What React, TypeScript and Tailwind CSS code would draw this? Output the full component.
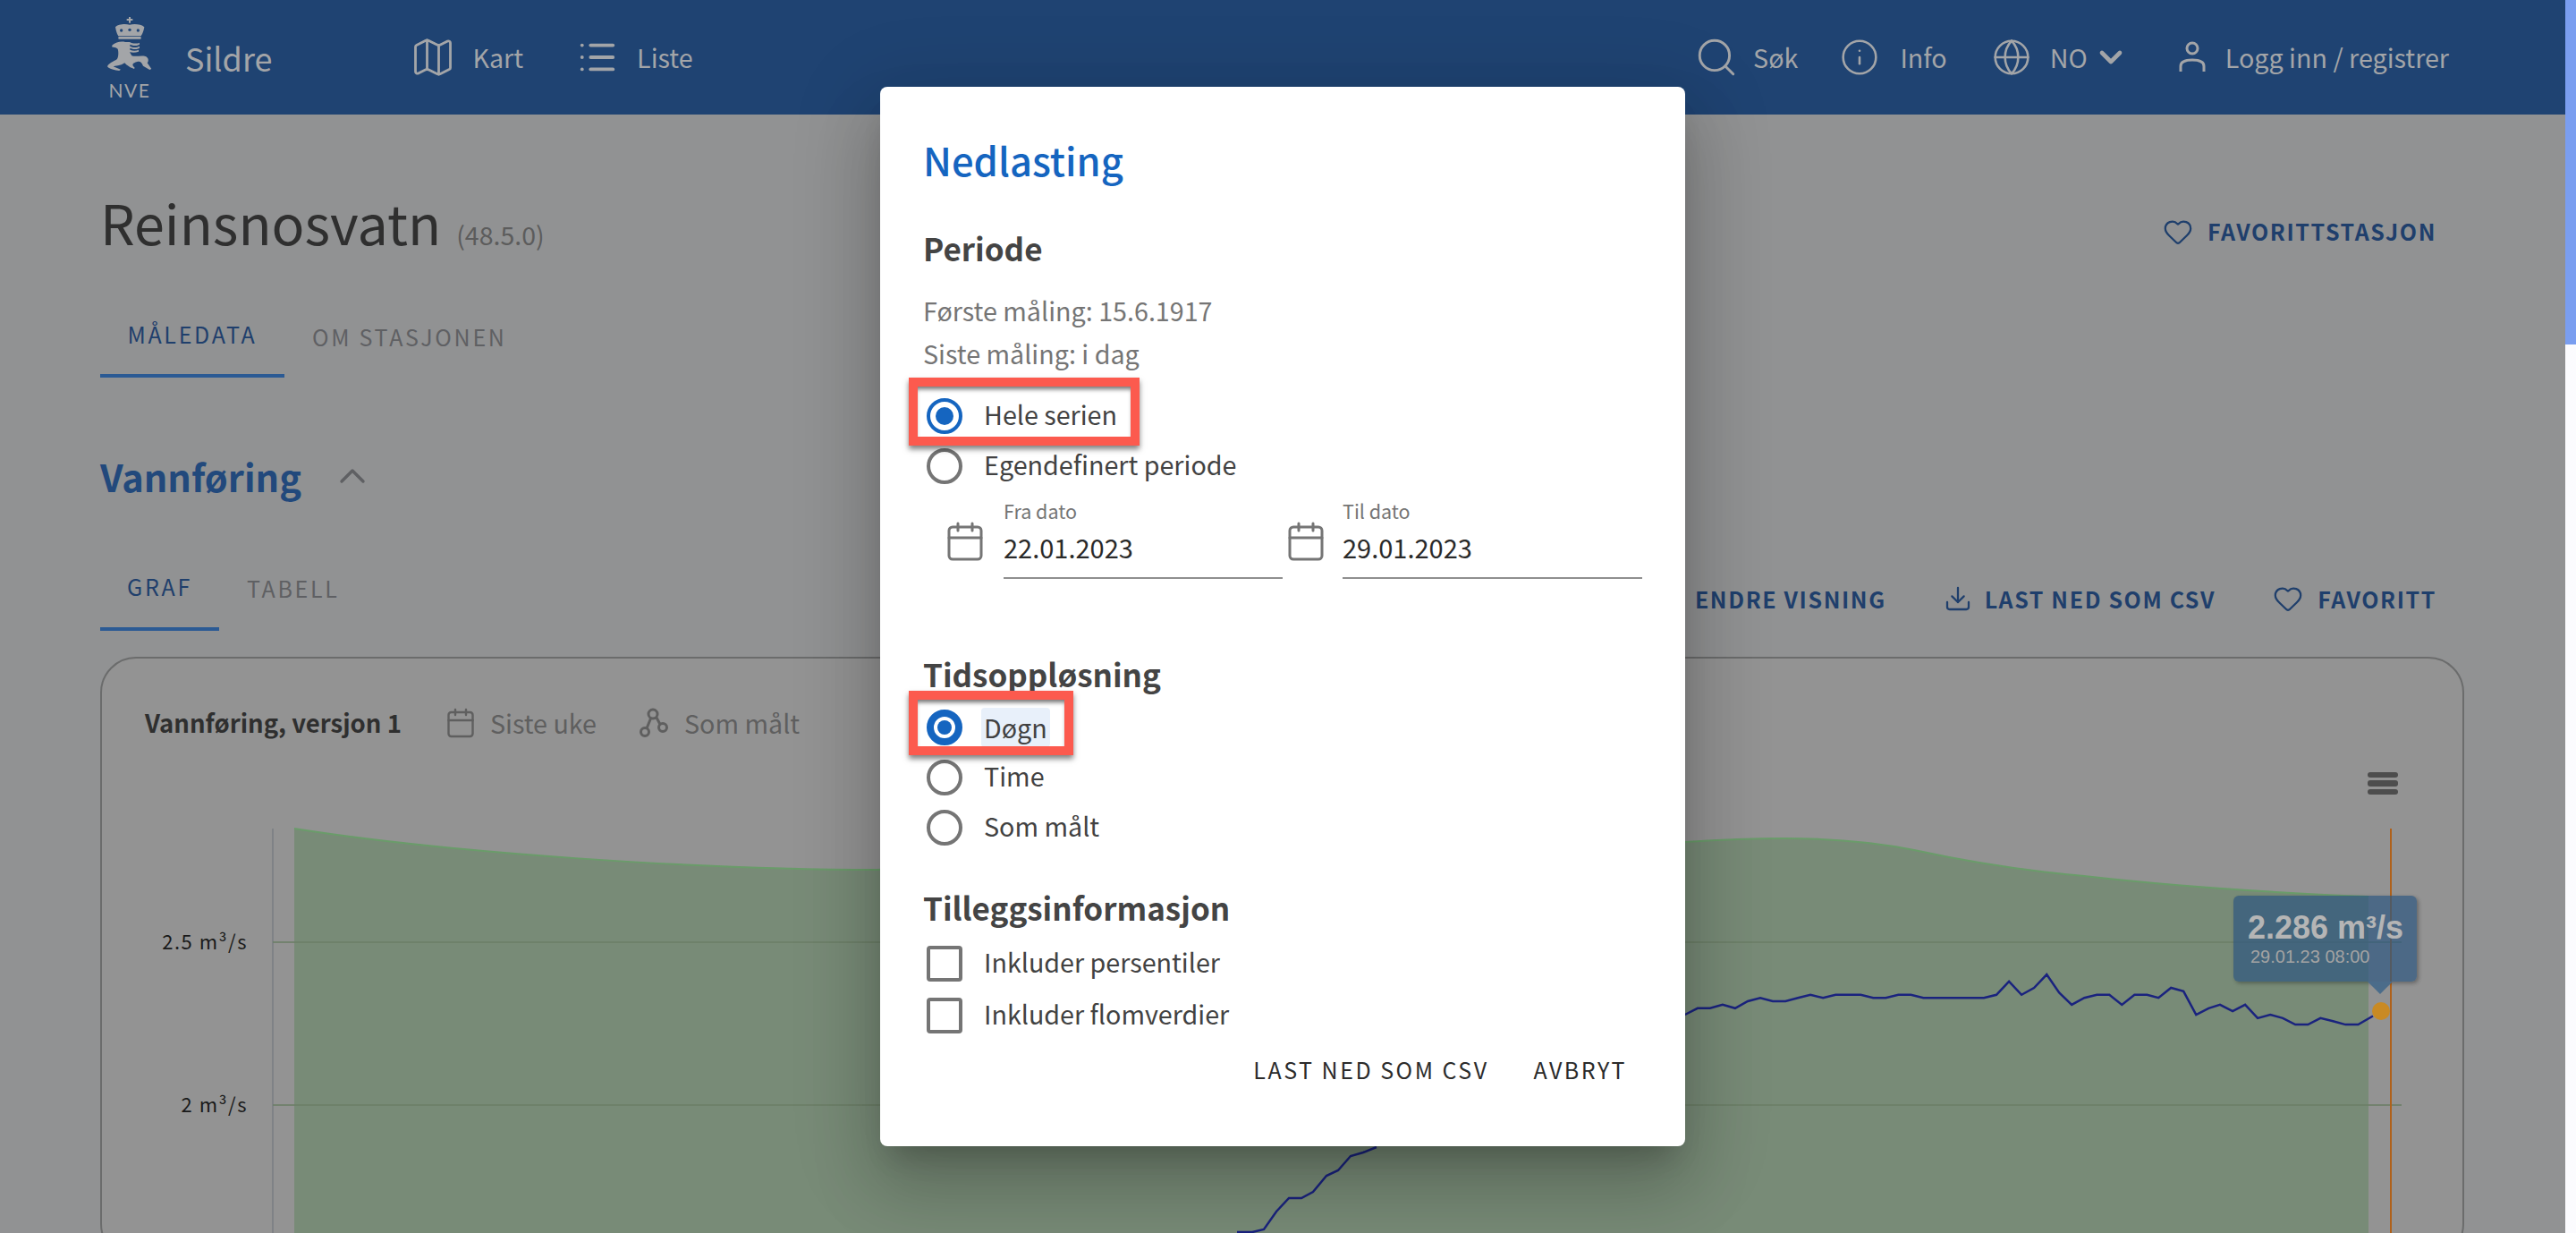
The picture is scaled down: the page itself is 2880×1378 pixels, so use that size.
import React from "react";
import { Calendar, ChevronDown, ChevronUp, Download, Globe, Heart, Info, List, Map, Search } from "lucide-react";

const linePoints = [
  [6, 1063], [28, 1048], [50, 1048], [72, 1040], [94, 1048], [116, 1032], [138, 1024], [160, 1032], [182, 1032],
  [204, 1024], [226, 1017], [248, 1024], [270, 1017], [292, 1017], [314, 1017], [336, 1024], [358, 1024], [380, 1017],
  [402, 1017], [424, 1024], [446, 1024], [530, 1024], [552, 1017], [574, 986], [596, 1017], [618, 1001], [640, 970],
  [662, 1012], [684, 1040], [706, 1024], [728, 1017], [750, 1017], [772, 1040], [794, 1017], [816, 1017], [836, 1024],
  [858, 1001], [880, 1009], [902, 1063], [924, 1048], [944, 1040], [966, 1055], [988, 1040], [1010, 1071], [1032, 1063],
  [1054, 1071], [1076, 1086], [1098, 1086], [1120, 1071], [1142, 1078], [1164, 1086], [1186, 1086], [1212, 1066],
];
const linePath = linePoints.map(([x, y]) => `${(1880 + x / 1.568).toFixed(1)},${(620 + y / 2.068).toFixed(1)}`).join(" ");

const NveLogo = () => (
  <div className="flex flex-col items-center w-[60px] text-[#a3a5a8]">
    <svg width="60" height="66" viewBox="75 55 180 198" fill="currentColor">
      <rect x="162" y="58" width="6" height="20" />
      <rect x="155" y="64" width="20" height="6" />
      <path d="M117 92C125 82 150 80 165 84 180 80 205 82 214 92 212 105 206 118 203 122H127C124 118 119 105 117 92Z" />
      <circle cx="137" cy="103" r="5" fill="#214677" />
      <circle cx="165" cy="101" r="5" fill="#214677" />
      <circle cx="193" cy="103" r="5" fill="#214677" />
      <rect x="127" y="124" width="76" height="8" rx="2" />
      <path d="M107 152C118 143 135 138 150 142L165 142C175 148 190 148 198 144L198 150C188 156 176 154 166 150L166 156C176 162 190 160 198 156L198 162C188 168 176 166 166 162L166 168C176 172 186 172 195 168L195 174C185 178 175 178 165 176L172 188C185 192 205 186 218 190 228 194 230 205 224 212L238 232 232 235 210 222C205 210 200 205 190 208 175 212 170 218 182 228L180 232C160 226 150 214 148 212 135 222 115 222 110 224L135 234 130 238C115 236 98 234 90 224 95 212 110 208 122 200 128 192 128 175 125 165 118 160 112 160 105 158Z" />
    </svg>
    <span className="text-[21px] leading-[20px] tracking-[1.5px] mt-[7px] font-['Lato',sans-serif]">NVE</span>
  </div>
);

const UserIcon = () => (
  <svg width="30" height="36" viewBox="0 0 30 36" fill="none" stroke="currentColor" strokeWidth="3">
    <circle cx="15" cy="8" r="6" />
    <path d="M2 34v-6c0-4 4-7 13-7s13 3 13 7v6" />
  </svg>
);

const NodesIcon = () => (
  <svg width="32" height="34" viewBox="0 0 32 34" fill="none" stroke="#5f5f5f" strokeWidth="3">
    <circle cx="15" cy="7" r="5" />
    <circle cx="6" cy="27" r="4.500" />
    <circle cx="26" cy="22" r="4.500" />
    <path d="M12.500 12 8 23M19 11l4 7.500" />
  </svg>
);

const NavLink = ({ icon, label, className }: { icon: React.ReactNode; label: string; className: string }) => (
  <div className={`flex items-center text-[#a3a5a8] text-[28.7px] ${className}`}>
    {icon}
    <span>{label}</span>
  </div>
);

const Radio = ({ label, checked, focused }: { label: string; checked?: boolean; focused?: boolean }) => (
  <div className="flex items-center h-[56px] pl-[4px]">
    <span
      className={`flex items-center justify-center w-[40px] h-[40px] rounded-full ${
        checked ? (focused ? "border-[8px] border-[#1565c0]" : "border-[4px] border-[#1565c0]") : "border-[4px] border-[#757575]"
      }`}
    >
      {checked && <span className={`rounded-full bg-[#1565c0] ${focused ? "w-[16px] h-[16px]" : "w-[20px] h-[20px]"}`} />}
    </span>
    {focused ? (
      <span className="ml-[21px] px-[3px] text-[28.7px] leading-[44px] text-[#424242] bg-[#e8f0fa] rounded-[4px]">{label}</span>
    ) : (
      <span className="ml-[24px] pb-[5px] text-[28.7px] text-[#424242]">{label}</span>
    )}
  </div>
);

const Check = ({ label }: { label: string }) => (
  <div className="flex items-center h-[56px] pl-[4px]">
    <span className="w-[40px] h-[40px] rounded-[4px] border-[4px] border-[#757575]" />
    <span className="ml-[24px] pb-[5px] text-[28.7px] text-[#424242]">{label}</span>
  </div>
);

const DateField = ({ label, value, inputClass }: { label: string; value: string; inputClass: string }) => (
  <div className="flex items-start">
    <Calendar size={48} strokeWidth={1.5} className="text-[#757575] mt-[26px] shrink-0" />
    <div className={inputClass}>
      <div className="text-[21.5px] leading-[32px] text-[#757575]">{label}</div>
      <div className="text-[29px] leading-[48px] text-[#2a2a2a] border-b-2 border-[#8f8f8f] pb-[10px]">{value}</div>
    </div>
  </div>
);

const Marker = ({ top, left, width, height }: { top: string; left: string; width: string; height: string }) => (
  <div
    className={`absolute ${top} ${left} ${width} ${height} border-[10px] border-[#fc5a4e] shadow-[0_4px_6px_rgba(0,0,0,0.5),inset_0_5px_5px_-2px_rgba(0,0,0,0.55)]`}
  />
);

const Modal = () => (
  <div className="absolute inset-0 flex items-center justify-center">
    <div className="relative w-[900px] h-[1184px] px-[48px] pt-[50px] bg-white rounded-[8px] shadow-[0_22px_30px_-14px_rgba(0,0,0,0.2),0_48px_76px_6px_rgba(0,0,0,0.14),0_18px_92px_16px_rgba(0,0,0,0.12)]">
      <h2 className="text-[43.5px] leading-[64px] font-medium text-[#1565c0]">Nedlasting</h2>
      <h3 className="mt-[42px] text-[35px] leading-[48px] font-semibold text-[#444444]">Periode</h3>
      <p className="mt-[22px] text-[28.7px] leading-[48px] text-[#757575]">Første måling: 15.6.1917</p>
      <p className="text-[28.7px] leading-[48px] text-[#757575]">Siste måling: i dag</p>
      <div className="mt-[18px]">
        <Radio label="Hele serien" checked />
        <Radio label="Egendefinert periode" />
      </div>
      <div className="flex mt-[6px] pl-[23px]">
        <DateField label="Fra dato" value="22.01.2023" inputClass="ml-[19px] w-[312px]" />
        <div className="w-[2px]" />
        <DateField label="Til dato" value="29.01.2023" inputClass="ml-[17px] w-[335px]" />
      </div>
      <h3 className="mt-[82px] text-[35px] leading-[48px] font-semibold text-[#444444]">Tidsoppløsning</h3>
      <div className="mt-[8px]">
        <Radio label="Døgn" checked focused />
        <Radio label="Time" />
        <Radio label="Som målt" />
      </div>
      <h3 className="mt-[37px] text-[35px] leading-[48px] font-semibold text-[#444444]">Tilleggsinformasjon</h3>
      <div className="mt-[11px] flex flex-col gap-[2px]">
        <Check label="Inkluder persentiler" />
        <Check label="Inkluder flomverdier" />
      </div>
      <div className="flex justify-end gap-[50px] mt-[8px] pr-[17px] text-[25px] leading-[48px] tracking-[2.5px] text-[#2b2b2b]">
        <span>LAST NED SOM CSV</span>
        <span>AVBRYT</span>
      </div>
      <Marker top="top-[325px]" left="left-[32px]" width="w-[258px]" height="h-[76px]" />
      <Marker top="top-[675px]" left="left-[32px]" width="w-[184px]" height="h-[72px]" />
    </div>
  </div>
);

const Chart = () => (
  <div className="relative">
    <svg width="2639" height="560" viewBox="114 846 2639 560" className="block">
      <path
        d="M329,926 C500,953 780,972 980,972 L1884,941 C1930,938 1960,937 1995,937 C2050,937 2100,942 2140,950 C2200,963 2260,973 2330,979 C2400,987 2500,996 2648,1002 L2648,1406 L329,1406 Z"
        fill="#788b77"
      />
      <path
        d="M329,926 C500,953 780,972 980,972 L1884,941 C1930,938 1960,937 1995,937 C2050,937 2100,942 2140,950 C2200,963 2260,973 2330,979 C2400,987 2500,996 2648,1002"
        fill="none"
        stroke="#6a9c6a"
        strokeWidth="2"
      />
      <line x1="305" y1="926" x2="305" y2="1406" stroke="#7f8286" strokeWidth="2" />
      <line x1="305" y1="1053" x2="2685" y2="1053" stroke="#6c7e66" strokeOpacity="0.8" strokeWidth="2" />
      <line x1="305" y1="1235" x2="2685" y2="1235" stroke="#6c7e66" strokeOpacity="0.8" strokeWidth="2" />
      <text x="277" y="1061" textAnchor="end" fontSize="22" letterSpacing="1.500" fill="#1a1a1a">2.5 m³/s</text>
      <text x="277" y="1243" textAnchor="end" fontSize="22" letterSpacing="1.500" fill="#1a1a1a">2 m³/s</text>
      <polyline points={linePath} fill="none" stroke="#1a237e" strokeWidth="2.500" />
      <polyline
        points="1383,1377 1400,1377 1413,1374 1427,1354 1441,1339 1455,1339 1468,1332 1483,1314 1496,1308 1510,1292 1524,1288 1539,1282"
        fill="none"
        stroke="#1a237e"
        strokeWidth="2.500"
      />
      <line x1="2673" y1="926" x2="2673" y2="1406" stroke="#b0611a" strokeWidth="2" />
      <circle cx="2662" cy="1130" r="10" fill="#c98a24" />
      <rect x="2647" y="863" width="34" height="6" rx="3" fill="#4d4d4d" />
      <rect x="2647" y="872" width="34" height="7" rx="3" fill="#4d4d4d" />
      <rect x="2647" y="882" width="34" height="6" rx="3" fill="#4d4d4d" />
    </svg>
    <div className="absolute left-[2383px] top-[155px] w-[205px] h-[96px] pl-[16px] pt-[14px] rounded-[6px] bg-[#2e5780]/70 shadow-[2px_2px_4px_rgba(0,0,0,0.3)] font-['Liberation_Sans',sans-serif]">
      <div className="text-[36px] leading-[44px] font-bold text-[#b5b5b5] whitespace-nowrap">2.286 m³/s</div>
      <div className="text-[20px] leading-[24px] text-[#a3a3a3] ml-[3px] -mt-[2px]">29.01.23 08:00</div>
      <div className="absolute left-[150px] top-[96px] w-0 h-0 border-x-[14px] border-x-transparent border-t-[14px] border-t-[#4b6c8a]" />
    </div>
  </div>
);

export default function App() {
  return (
    <div className="flex h-screen w-full overflow-hidden font-['Noto_Sans_CJK_SC',sans-serif]">
      <div className="relative flex-1 min-w-0 overflow-hidden bg-[#919293]">
        <header className="flex items-center h-[128px] pl-[115px] bg-[#1f4372]">
          <div className="self-start pt-[18px]">
            <NveLogo />
          </div>
          <span className="ml-[32px] text-[36px] text-[#a3a5a8]">Sildre</span>
          <NavLink icon={<Map size={52} strokeWidth={1.3} className="mr-[18px]" />} label="Kart" className="ml-[154px]" />
          <NavLink icon={<List size={46} strokeWidth={2} className="mr-[21px]" />} label="Liste" className="ml-[60px]" />
          <div className="flex-1" />
          <NavLink icon={<Search size={50} strokeWidth={1.4} className="mr-[16px]" />} label="Søk" className="" />
          <NavLink icon={<Info size={44} strokeWidth={1.4} className="mr-[23px]" />} label="Info" className="ml-[47px]" />
          <NavLink icon={<Globe size={44} strokeWidth={1.4} className="mr-[21px]" />} label="NO" className="ml-[50px]" />
          <ChevronDown size={40} strokeWidth={2.800} className="ml-[6px] text-[#a3a5a8]" />
          <NavLink icon={<span className="mr-[22px]"><UserIcon /></span>} label="Logg inn / registrer" className="ml-[56px] mr-[130px]" />
        </header>

        <main className="pl-[112px] pr-[113px]">
          <div className="flex items-center justify-between mt-[82px] h-[76px]">
            <div className="flex items-baseline">
              <h1 className="text-[61px] leading-[76px] text-[#2f2f2f]">Reinsnosvatn</h1>
              <span className="ml-[17px] text-[28.5px] text-[#5c5c5c]">(48.5.0)</span>
            </div>
            <div className="flex items-center mt-[22px] mr-[31px] text-[25px] font-semibold tracking-[1.6px] text-[#1f3f6c]">
              <Heart size={34} strokeWidth={1.6} className="mr-[16px]" />
              FAVORITTSTASJON
            </div>
          </div>

          <div className="flex mt-[64px] h-[72px] text-[25px] leading-[46px] tracking-[2.7px]">
            <span className="w-[206px] text-center text-[#1f3f6c] border-b-4 border-[#2b5a94]">MÅLEDATA</span>
            <span className="ml-[31px] mt-[3px] text-[#5f6063]">OM STASJONEN</span>
          </div>

          <div className="flex items-center mt-[76px] h-[68px]">
            <h2 className="text-[41.5px] font-semibold text-[#22497c]">Vannføring</h2>
            <ChevronUp size={48} strokeWidth={1.7} className="ml-[33px] text-[#5f6063]" />
          </div>

          <div className="flex items-start justify-between mt-[59px] h-[82px] text-[25px] leading-[60px]">
            <div className="flex tracking-[2.7px]">
              <span className="w-[133px] h-[80px] text-center text-[#1f3f6c] border-b-4 border-[#2b5a94]">GRAF</span>
              <span className="ml-[31px] mt-[2px] text-[#5f6063]">TABELL</span>
            </div>
            <div className="flex items-center h-[60px] mt-[14px] mr-[31px] font-semibold tracking-[1.6px] text-[#1f3f6c]">
              <span>ENDRE VISNING</span>
              <Download size={32} strokeWidth={1.7} className="ml-[64px] mr-[14px]" />
              <span>LAST NED SOM CSV</span>
              <Heart size={34} strokeWidth={1.6} className="ml-[64px] mr-[16px]" />
              <span>FAVORITT</span>
            </div>
          </div>

          <section className="mt-[27px] border-2 border-[#6b6c6c] rounded-[40px] bg-[#939393] w-[2643px]">
            <div className="flex items-center pl-[48px] h-[110px] pt-[34px] text-[28.7px]">
              <span className="text-[27.5px] font-semibold text-[#2f2f2f]">Vannføring, versjon 1</span>
              <Calendar size={36} strokeWidth={1.6} className="ml-[48px] mr-[15px] text-[#5f5f5f]" />
              <span className="text-[#5f5f5f]">Siste uke</span>
              <span className="ml-[48px] mr-[18px]"><NodesIcon /></span>
              <span className="text-[#5f5f5f]">Som målt</span>
            </div>
            <Chart />
          </section>
        </main>

        <Modal />
      </div>
      <div className="w-[12px] shrink-0 bg-[#fbfbfe]">
        <div className="h-[385px] bg-[#7a9ef0]" />
      </div>
    </div>
  );
}
